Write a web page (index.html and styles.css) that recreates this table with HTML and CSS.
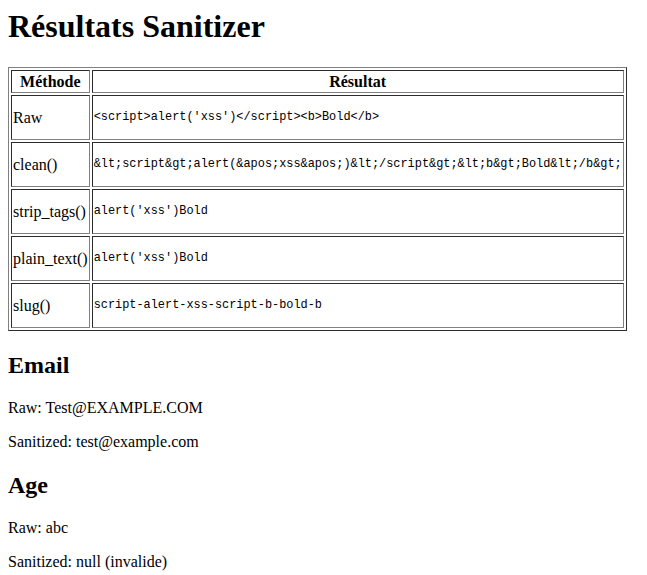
FILE: index.html
```html
<!DOCTYPE html>
<html lang="fr">
<head>
<meta charset="utf-8">
<title>Résultats Sanitizer</title>
<link rel="stylesheet" href="styles.css">
</head>
<body class="page">
<h1 class="title">Résultats Sanitizer</h1>
<table class="results">
  <thead>
    <tr><th class="cell">Méthode</th><th class="cell">Résultat</th></tr>
  </thead>
  <tbody>
    <tr><td class="cell">Raw</td><td class="cell"><pre class="code">&lt;script&gt;alert('xss')&lt;/script&gt;&lt;b&gt;Bold&lt;/b&gt;</pre></td></tr>
    <tr><td class="cell">clean()</td><td class="cell"><pre class="code">&amp;lt;script&amp;gt;alert(&amp;apos;xss&amp;apos;)&amp;lt;/script&amp;gt;&amp;lt;b&amp;gt;Bold&amp;lt;/b&amp;gt;</pre></td></tr>
    <tr><td class="cell">strip_tags()</td><td class="cell"><pre class="code">alert('xss')Bold</pre></td></tr>
    <tr><td class="cell">plain_text()</td><td class="cell"><pre class="code">alert('xss')Bold</pre></td></tr>
    <tr><td class="cell">slug()</td><td class="cell"><pre class="code">script-alert-xss-script-b-bold-b</pre></td></tr>
  </tbody>
</table>
<h2 class="section">Email</h2>
<p class="line">Raw: Test@EXAMPLE.COM</p>
<p class="line">Sanitized: test@example.com</p>
<h2 class="section">Age</h2>
<p class="line">Raw: abc</p>
<p class="line">Sanitized: null (invalide)</p>
</body>
</html>
```
FILE: styles.css
```css
html { background: #fff; }
.page {
  margin: 8px;
  font-family: "Liberation Serif", "Times New Roman", serif;
  font-size: 16px;
  color: #000;
}
.title {
  font-size: 32px;
  line-height: 37px;
  font-weight: bold;
  margin: 0 0 22px;
}
.results {
  border: 1px outset gray;
  border-spacing: 2px;
  border-collapse: separate;
}
.cell {
  border: 1px inset gray;
  padding: 1px;
  vertical-align: middle;
  line-height: 18px;
}
th.cell {
  font-weight: bold;
  text-align: center;
  line-height: 19px;
}
td.cell { text-align: left; }
.code {
  margin: 13px 0;
  font-family: "Liberation Mono", "DejaVu Sans Mono", monospace;
  font-size: 11.9px;
  line-height: 15px;
}
.section {
  font-size: 24px;
  font-weight: bold;
  margin: 20.92px 0 19.92px;
}
.line {
  margin: 16px 0;
}
```
